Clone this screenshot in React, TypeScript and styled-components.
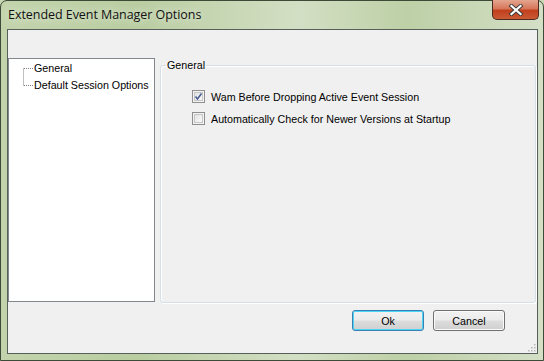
import React from "react";
import styled, { createGlobalStyle } from "styled-components";

const Global = createGlobalStyle`
  html, body { margin: 0; padding: 0; background: #c8d8b4; }
  body { width: 544px; height: 361px; overflow: hidden; font-family: "Liberation Sans", Arial, sans-serif; }
`;

const Window = styled.div`
  position: relative;
  box-sizing: border-box;
  width: 544px;
  height: 361px;
  border: 1px solid #3c4a38;
  border-radius: 7px 7px 0 0;
  background: linear-gradient(90deg, #c3d4ad 0%, #b9cda1 25%, #d3dfc4 55%, #bdd0a6 75%, #d4dfc6 100%);
  display: flex;
  flex-direction: column;
`;

const TitleBar = styled.div`
  height: 28px;
  display: flex;
  align-items: flex-start;
  padding-left: 7px;
  padding-top: 5px;
  box-sizing: border-box;
`;

const Title = styled.div`
  font-family: "Open Sans", "Noto Sans", sans-serif;
  font-size: 12.5px;
  color: #111;
  letter-spacing: -0.05px;
  text-shadow: 0 0 8px rgba(255,255,255,0.9);
`;

const CloseButton = styled.div`
  position: absolute;
  top: -1px;
  right: 4px;
  width: 47px;
  height: 20px;
  box-sizing: border-box;
  border: 1px solid #4b2a22;
  border-top: none;
  border-radius: 0 0 5px 5px;
  background: linear-gradient(180deg, #e3a58f 0%, #d7775a 45%, #c1401e 55%, #cb5a34 100%);
  display: flex;
  align-items: center;
  justify-content: center;
`;

const Client = styled.div`
  flex: 1;
  margin: 0 5px 6px 6px;
  border: 1px solid #55605a;
  background: #f0f0f0;
  display: flex;
  flex-direction: column;
  position: relative;
`;

const Body = styled.div`
  display: flex;
  padding-top: 28px;
  height: 243px;
`;

const Tree = styled.div`
  width: 147px;
  box-sizing: border-box;
  background: #fff;
  border: 1px solid #828790;
  height: 244px;
  position: relative;
`;

const TreeItem = styled.div<{ $top: number }>`
  position: absolute;
  left: 25px;
  top: ${(p) => p.$top}px;
  font-size: 10.7px;
  color: #000;
  line-height: 13px;
  white-space: nowrap;
`;

const TreeLines = styled.svg`
  position: absolute;
  left: 0;
  top: 0;
`;

const Panel = styled.div`
  flex: 1;
  margin-left: 5px;
  margin-right: 1px;
  position: relative;
`;

const GroupBox = styled.fieldset`
  margin: 0;
  box-sizing: border-box;
  height: 244px;
  padding: 0;
  border: 1px solid #d5dfe5;
  box-shadow: inset 1px 1px 0 #fff, 1px 1px 0 #fff;
  border-radius: 3px;
  position: relative;
  top: 1px;
`;

const Legend = styled.legend`
  font-size: 10.7px;
  color: #000;
  padding: 0 1px;
  margin-left: 5px;
  line-height: 13px;
`;

const Options = styled.div`
  display: flex;
  flex-direction: column;
  gap: 9px;
  padding: 18px 0 0 31px;
`;

const OptionRow = styled.label`
  display: flex;
  align-items: center;
  gap: 6px;
  font-size: 10.7px;
  color: #000;
  height: 13px;
`;

const Box = styled.span<{ $checked?: boolean }>`
  width: 13px;
  height: 13px;
  box-sizing: border-box;
  border: 1px solid #8f8f8f;
  background: linear-gradient(135deg, #dcdcdc 0%, #f2f2f2 60%, #ffffff 100%);
  box-shadow: inset 0 0 0 1px #f4f4f4, inset 0 0 0 2px #c6c6c6;
  display: flex;
  align-items: center;
  justify-content: center;
`;

const Footer = styled.div`
  display: flex;
  justify-content: flex-end;
  gap: 9px;
  padding: 9px 32px 0 0;
`;

const Button = styled.div<{ $default?: boolean }>`
  width: 72px;
  height: 21px;
  box-sizing: border-box;
  border: 1px solid ${(p) => (p.$default ? "#3c7fb1" : "#707070")};
  border-radius: 3px;
  background: linear-gradient(180deg, #f2f2f2 0%, #ebebeb 48%, #dddddd 52%, #cfcfcf 100%);
  box-shadow: inset 0 0 0 1px ${(p) => (p.$default ? "#48d7f8" : "#fbfbfb")};
  display: flex;
  align-items: center;
  justify-content: center;
  font-size: 10.7px;
  color: #000;
`;

const Grip = styled.svg`
  position: absolute;
  right: 1px;
  bottom: 1px;
`;

export default function App() {
  return (
    <>
      <Global />
      <Window>
        <TitleBar>
          <Title>Extended Event Manager Options</Title>
        </TitleBar>
        <CloseButton>
          <svg width="16" height="12" viewBox="0 0 16 12">
            <path d="M3.5 2 L12.5 10 M12.5 2 L3.5 10" stroke="#3a3a3a" strokeWidth="4" strokeLinecap="square" />
            <path d="M3.5 2 L12.5 10 M12.5 2 L3.5 10" stroke="#ffffff" strokeWidth="2.2" strokeLinecap="square" />
          </svg>
        </CloseButton>
        <Client>
          <Body>
            <Tree>
              <TreeLines width="30" height="40">
                <path d="M14.5 9.5 V26.5 M15 9.5 H24 M15 26.5 H24" stroke="#808080" strokeDasharray="1 1" fill="none" />
              </TreeLines>
              <TreeItem $top={3}>General</TreeItem>
              <TreeItem $top={20}>Default Session Options</TreeItem>
            </Tree>
            <Panel>
              <GroupBox>
                <Legend>General</Legend>
                <Options>
                  <OptionRow>
                    <Box $checked>
                      <svg width="9" height="9" viewBox="0 0 9 9">
                        <path d="M1.5 4.5 L3.5 7 L7.5 1.5" stroke="#4a5f97" strokeWidth="1.6" fill="none" />
                      </svg>
                    </Box>
                    Wam Before Dropping Active Event Session
                  </OptionRow>
                  <OptionRow>
                    <Box />
                    Automatically Check for Newer Versions at Startup
                  </OptionRow>
                </Options>
              </GroupBox>
            </Panel>
          </Body>
          <Footer>
            <Button $default>Ok</Button>
            <Button>Cancel</Button>
          </Footer>
          <Grip width="10" height="10">
            {[[8, 2], [8, 5], [5, 5], [8, 8], [5, 8], [2, 8]].map(([x, y], i) => (
              <rect key={i} x={x} y={y} width="1.5" height="1.5" fill="#b8b8b8" />
            ))}
          </Grip>
        </Client>
      </Window>
    </>
  );
}
